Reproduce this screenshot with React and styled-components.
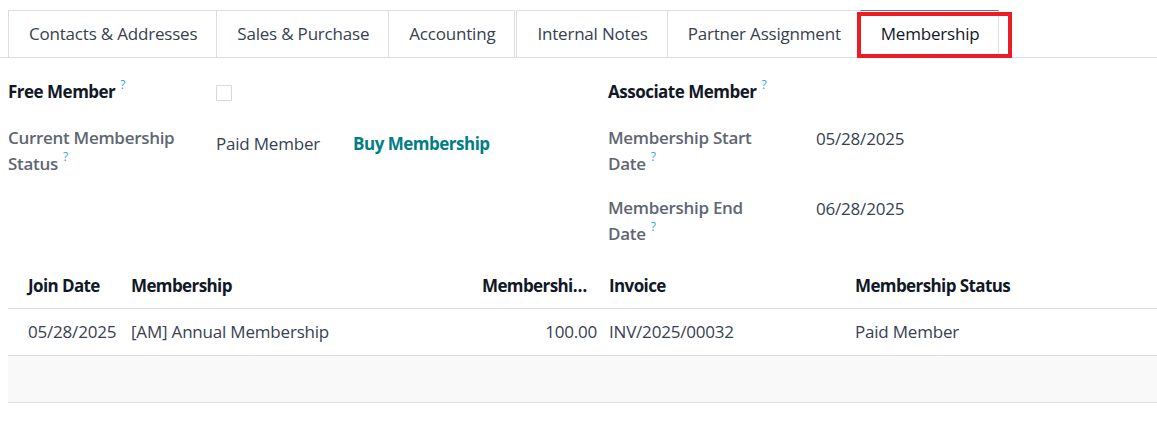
import React from "react";
import styled, { createGlobalStyle } from "styled-components";

const GlobalStyle = createGlobalStyle`
  html, body {
    margin: 0;
    padding: 0;
    background: #fff;
  }
  body {
    font-family: "Open Sans", "Noto Sans", sans-serif;
    font-size: 17px;
    line-height: 26px;
    color: #374151;
    letter-spacing: -0.2px;
  }
`;

const tabs = [
  { label: "Contacts & Addresses" },
  { label: "Sales & Purchase" },
  { label: "Accounting", split: true },
  { label: "Internal Notes" },
  { label: "Partner Assignment" },
  { label: "Membership", active: true },
];

const lines = [
  {
    date: "05/28/2025",
    product: "[AM] Annual Membership",
    price: "100.00",
    invoice: "INV/2025/00032",
    state: "Paid Member",
  },
];

export default function App() {
  return (
    <Page>
      <GlobalStyle />
      <TabBar>
        {tabs.map((t) => (
          <Tab key={t.label} $active={t.active} $split={t.split}>
            {t.label}
            {t.active && <Highlight />}
          </Tab>
        ))}
      </TabBar>

      <Groups>
        <Group>
          <Field>
            <Label $strong>
              Free Member<Help>?</Help>
            </Label>
            <Value>
              <Checkbox type="checkbox" />
            </Value>
          </Field>
          <Field>
            <Label>
              Current Membership Status<Help>?</Help>
            </Label>
            <Value $offset>
              <span>Paid Member</span>
              <LinkButton>Buy Membership</LinkButton>
            </Value>
          </Field>
        </Group>

        <Group>
          <Field>
            <Label $strong>
              Associate Member<Help>?</Help>
            </Label>
            <Value />
          </Field>
          <Field>
            <Label>
              Membership Start Date<Help>?</Help>
            </Label>
            <Value>05/28/2025</Value>
          </Field>
          <Field>
            <Label>
              Membership End Date<Help>?</Help>
            </Label>
            <Value>06/28/2025</Value>
          </Field>
        </Group>
      </Groups>

      <Table>
        <colgroup>
          <col style={{ width: 115 }} />
          <col style={{ width: 351 }} />
          <col style={{ width: 127 }} />
          <col style={{ width: 246 }} />
          <col />
        </colgroup>
        <thead>
          <tr>
            <Th $first>Join Date</Th>
            <Th>Membership</Th>
            <Th $right>Membership Fee</Th>
            <Th>Invoice</Th>
            <Th>Membership Status</Th>
          </tr>
        </thead>
        <tbody>
          {lines.map((l) => (
            <tr key={l.invoice}>
              <Td $first>{l.date}</Td>
              <Td>{l.product}</Td>
              <Td $right>{l.price}</Td>
              <Td>{l.invoice}</Td>
              <Td>{l.state}</Td>
            </tr>
          ))}
          <EmptyRow>
            <Td colSpan={5} />
          </EmptyRow>
        </tbody>
      </Table>
    </Page>
  );
}

const Page = styled.div`
  padding-top: 10px;
  width: 1157px;
`;

const TabBar = styled.div`
  display: flex;
  padding-left: 8px;
  border-bottom: 1px solid #dcdee2;
`;

const Tab = styled.div`
  position: relative;
  height: 46px;
  display: flex;
  align-items: center;
  padding: 0 19px 0 20px;
  margin-bottom: -1px;
  border: 1px solid #dcdee2;
  border-right: ${(p) => (p.$split ? "1px solid #dcdee2" : "none")};
  border-top-color: ${(p) => (p.$active ? "#7c6a78" : "#dcdee2")};
  border-bottom-color: ${(p) => (p.$active ? "#fff" : "#dcdee2")};
  margin-right: ${(p) => (p.$split ? "1px" : "0")};
  color: ${(p) => (p.$active ? "#111827" : "#374151")};
  background: #fff;
  white-space: nowrap;

  &:last-child {
    border-right: 1px solid #dcdee2;
  }
`;

const Highlight = styled.span`
  position: absolute;
  left: -4px;
  right: -14px;
  top: 1px;
  bottom: -1px;
  border: 4px solid #ec1c24;
  pointer-events: none;
`;

const Groups = styled.div`
  display: grid;
  grid-template-columns: 600px 1fr;
  padding: 21px 0 0 8px;
`;

const Group = styled.div`
  display: flex;
  flex-direction: column;
  gap: 18px;
`;

const Field = styled.div`
  display: grid;
  grid-template-columns: 208px 1fr;
  min-height: 28px;
  align-items: start;
`;

const Label = styled.div`
  font-weight: ${(p) => (p.$strong ? 700 : 600)};
  color: ${(p) => (p.$strong ? "#111827" : "#5f6672")};
  letter-spacing: ${(p) => (p.$strong ? "-0.5px" : "-0.3px")};
  padding-right: 34px;
`;

const Help = styled.sup`
  display: inline-block;
  color: #2ea7db;
  font-size: 12px;
  line-height: 12px;
  font-weight: 500;
  margin-left: 5px;
  vertical-align: 9px;
`;

const Value = styled.div`
  display: flex;
  align-items: center;
  gap: 33px;
  min-height: 28px;
  padding-top: ${(p) => (p.$offset ? "5px" : "0")};
`;

const Checkbox = styled.input`
  appearance: none;
  width: 16px;
  height: 16px;
  margin: 0;
  border: 1px solid #d5d8dc;
  border-radius: 1px;
  background: #fff;
`;

const LinkButton = styled.span`
  color: #017e84;
  font-weight: 700;
  letter-spacing: -0.5px;
`;

const Table = styled.table`
  margin: 16px 0 0 8px;
  width: 1149px;
  table-layout: fixed;
  border-collapse: collapse;
`;

const Th = styled.th`
  height: 45px;
  padding: 0 ${(p) => (p.$right ? "4px" : p.$first ? "0" : "8px")} 0
    ${(p) => (p.$first ? "20px" : "8px")};
  text-align: ${(p) => (p.$right ? "right" : "left")};
  font-weight: 700;
  letter-spacing: -0.6px;
  color: #111827;
  border-bottom: 1px solid #dcdee2;
  white-space: nowrap;
  overflow: hidden;
  text-overflow: ellipsis;
`;

const Td = styled.td`
  height: 46px;
  padding: 0 ${(p) => (p.$right ? "4px" : p.$first ? "0" : "8px")} 0
    ${(p) => (p.$first ? "20px" : "8px")};
  text-align: ${(p) => (p.$right ? "right" : "left")};
  border-bottom: 1px solid #dcdee2;
  white-space: nowrap;
  overflow: hidden;
  text-overflow: ellipsis;
`;

const EmptyRow = styled.tr`
  background: #f9f9f9;
`;
